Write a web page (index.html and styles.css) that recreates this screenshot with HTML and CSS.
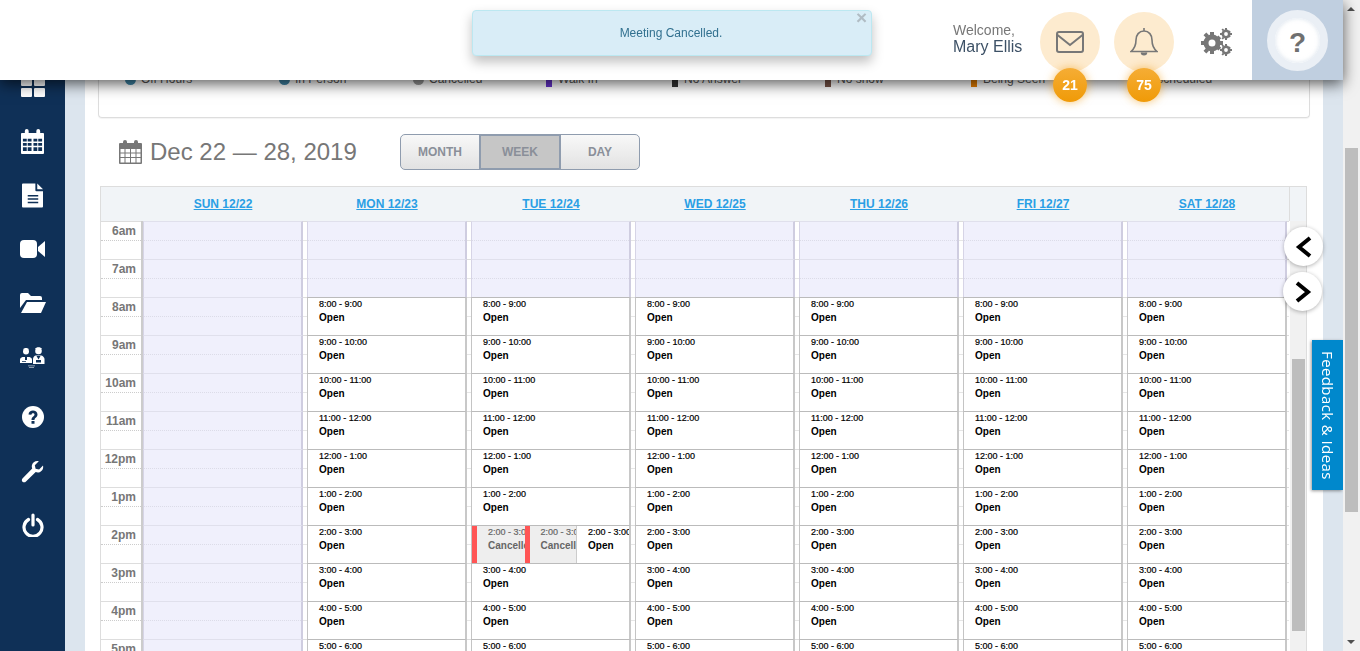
FILE: index.html
```html
<!DOCTYPE html>
<html lang="en">

<head>
    <meta charset="UTF-8">
    <title>Calendar</title>

    <link rel="stylesheet" href="styles.css">

</head>

<body>
    <header class="topbar">
        <div class="toast">
            <span class="toast-close">&times;</span>
            Meeting Cancelled.
        </div>
        <div class="welcome">
            <span>Welcome,</span>
            <strong>Mary Ellis</strong>
        </div>
        <div class="round-btn">
            <svg width="30" height="24" viewBox="0 0 30 24" fill="none" stroke="#777" stroke-width="2">
                <rect x="2" y="2" width="26" height="20" rx="2"/>
                <path d="M2.500 5L15 15 27.500 5"/>
            </svg>
            <span class="badge">21</span>
        </div>
        <div class="round-btn">
            <svg width="28" height="30" viewBox="0 0 28 30" fill="none" stroke="#777" stroke-width="1.600">
                <path d="M14 1v3M14 4c-5 0-8 4-8 9 0 6-2 9-5 11.500h26c-3-2.500-5-5.500-5-11.500 0-5-3-9-8-9z"/>
                <path d="M11.500 25.500c0 3 5 3 5 0" fill="#777"/>
            </svg>
            <span class="badge">75</span>
        </div>
        <div class="gears">
            <svg width="32" height="28" viewBox="0 0 32 28" fill="#777">
                <circle cx="11" cy="15" r="6" fill="none" stroke="#777" stroke-width="5"/>
                <path d="M9 4h4v4H9zM9 22h4v4H9zM0 13h4v4H0zM18 13h4v4h-4zM2.500 7.300l2.800-2.800 2.800 2.800-2.800 2.800zM14.600 19.700l2.800-2.800 2.800 2.800-2.800 2.800zM2.500 22.700l2.800 2.800 2.800-2.800-2.800-2.800zM14.600 10.300l2.800 2.800 2.800-2.800-2.800-2.800z"/>
                <circle cx="25" cy="6" r="3.200" fill="none" stroke="#777" stroke-width="2.600"/>
                <path d="M24 0h2v2h-2zM24 10h2v2h-2zM19 5h2v2h-2zM29 5h2v2h-2zM20.500 1.500l1.400-1 1.400 1.500-1.400 1.200zM27 8l1.400-1.200 1.400 1.500-1.400 1.200zM20.500 10.500l1.400 1 1.400-1.500-1.400-1.200zM27 4l1.400 1.200 1.400-1.500-1.400-1.200z"/>
                <circle cx="25" cy="22" r="3.200" fill="none" stroke="#777" stroke-width="2.600"/>
                <path d="M24 16h2v2h-2zM24 26h2v2h-2zM19 21h2v2h-2zM29 21h2v2h-2zM20.500 17.500l1.400-1 1.400 1.500-1.400 1.200zM27 24l1.400-1.200 1.400 1.500-1.400 1.200zM20.500 26.500l1.400 1 1.400-1.500-1.400-1.200zM27 20l1.400 1.200 1.400-1.500-1.400-1.200z"/>
            </svg>
        </div>
        <div class="help-block">
            <div class="help-ring"><span>?</span></div>
        </div>
    </header>

    <nav class="sidebar">
        <a class="nav-item">
            <svg width="24" height="20" viewBox="0 0 24 20" fill="#fff">
                <rect x="0" y="0" width="11" height="9" rx="1"/>
                <rect x="13" y="0" width="11" height="9" rx="1"/>
                <rect x="0" y="11" width="11" height="9" rx="1"/>
                <rect x="13" y="11" width="11" height="9" rx="1"/>
            </svg>
        </a>
        <a class="nav-item">
            <svg width="23" height="25" viewBox="0 0 24 26" fill="#fff">
                <path d="M1 4h3V2a2 2 0 0 1 4 0v2h8V2a2 2 0 0 1 4 0v2h3a1 1 0 0 1 1 1v20a1 1 0 0 1-1 1H1a1 1 0 0 1-1-1V5a1 1 0 0 1 1-1z"/>
                <path fill="#0f3057" d="M2 10h4v3H2zM7 10h4v3H7zM13 10h4v3h-4zM18 10h4v3h-4zM2 14.500h4v3H2zM7 14.500h4v3H7zM13 14.500h4v3h-4zM18 14.500h4v3h-4zM2 19h4v4H2zM7 19h4v4H7zM13 19h4v4h-4zM18 19h4v4h-4z"/>
            </svg>
        </a>
        <a class="nav-item">
            <svg width="21" height="25" viewBox="0 0 22 25" fill="#fff">
                <path d="M1 0h13v7a1 1 0 0 0 1 1h7v16a1 1 0 0 1-1 1H1a1 1 0 0 1-1-1V1a1 1 0 0 1 1-1z"/>
                <path d="M16 0l6 6h-6z"/>
                <path fill="#0f3057" d="M6 12h11v1.500H6zM6 15.500h11V17H6zM6 19h11v1.500H6z"/>
            </svg>
        </a>
        <a class="nav-item">
            <svg width="25" height="18" viewBox="0 0 25 18" fill="#fff">
                <rect x="0" y="0" width="17" height="18" rx="4"/>
                <path d="M18 7l7-6v16l-7-6z"/>
            </svg>
        </a>
        <a class="nav-item">
            <svg width="26" height="20" viewBox="0 0 26 20" fill="#fff">
                <path d="M0 2a2 2 0 0 1 2-2h6l3 3h9a2 2 0 0 1 2 2v2H6L0 15z"/>
                <path d="M7 9h19l-5 11H1z"/>
            </svg>
        </a>
        <a class="nav-item">
            <svg width="25" height="21" viewBox="0 0 25 21" fill="#fff">
                <circle cx="6" cy="4.500" r="3"/>
                <path d="M3 2.500c1-2 5-2 6 0z"/>
                <path d="M0 16v-3.500c0-1 1-2 2.500-2.500h7c1.500.5 2.500 1.500 2.500 2.500V16z"/>
                <path fill="#0f3057" d="M5 10h2v3H5zM2 14h4v.8H2z"/>
                <circle cx="18.500" cy="4" r="3.300"/>
                <path d="M15 2c1-2.500 6-2.500 7 0z"/>
                <path d="M13 17v-5c0-1.500 1-3 2.500-3.500h6c1.500.5 3 2 3 3.500v5z"/>
                <path fill="#0f3057" d="M16.500 9h4l-2 3.500zM16 13h5v2.500h-5z"/>
                <path d="M8 18.500h7v.8H8zM9 20h5v.8H9z" opacity=".7"/>
            </svg>
        </a>
        <a class="nav-item nav-help">
            <svg width="22" height="22" viewBox="0 0 22 22">
                <circle cx="11" cy="11" r="11" fill="#fff"/>
                <path d="M6.500 8.500C6.500 5.800 8.800 4.500 11 4.500s4.500 1.300 4.500 4c0 3.200-3 3-3 5.500h-3c0-3.500 3-3.500 3-5.500 0-.8-.7-1.200-1.500-1.200-1 0-1.500.6-1.600 1.500zM9.500 15h3v2.800h-3z" fill="#0f3057"/>
            </svg>
        </a>
        <a class="nav-item">
            <svg width="23" height="23" viewBox="0 0 23 23" fill="#fff">
                <path d="M22 5.500c.8 3-1 6.500-4.500 7-1 .1-2 0-2.800-.4L5 21.500c-1 1-2.500 1.200-3.500.2s-.8-2.500.2-3.500l9.500-9.700c-.4-.9-.5-1.800-.4-2.700.5-3.500 4-5.300 7-4.500l-4 4 .8 3.500 3.500.8z"/>
            </svg>
        </a>
        <a class="nav-item">
            <svg width="22" height="24" viewBox="0 0 22 24" fill="none" stroke="#fff" stroke-width="3.200" stroke-linecap="round">
                <path d="M6.500 6.500a9 9 0 1 0 9 0"/>
                <path d="M11 2v10"/>
            </svg>
        </a>
    </nav>

    <main class="content">
        <section class="legend">
            <span class="key key-off"><i class="dot dot-blue"></i>Off Hours</span>
            <span class="key key-person"><i class="dot dot-blue"></i>In Person</span>
            <span class="key key-cancelled"><i class="dot dot-grey"></i>Cancelled</span>
            <span class="key key-walk"><i class="bar bar-purple"></i>Walk In</span>
            <span class="key key-answer"><i class="bar bar-black"></i>No Answer</span>
            <span class="key key-show"><i class="bar bar-brown"></i>No show</span>
            <span class="key key-seen"><i class="bar bar-orange"></i>Being Seen</span>
            <span class="key"><i class="bar bar-none"></i>Rescheduled</span>
        </section>

        <div class="toolbar">
            <h1 class="range">
                <svg width="23" height="24" viewBox="0 0 23 24" fill="#777">
                    <path d="M1 3h3V2a2 2 0 0 1 4 0v1h7V2a2 2 0 0 1 4 0v1h3a1 1 0 0 1 1 1v19a1 1 0 0 1-1 1H1a1 1 0 0 1-1-1V4a1 1 0 0 1 1-1z"/>
                    <path fill="#fff" d="M1.500 9h4v3.500h-4zM6.500 9h4.500v3.500H6.500zM12 9h4.500v3.500H12zM17.500 9h4v3.500h-4zM1.500 13.500h4V17h-4zM6.500 13.500h4.500V17H6.500zM12 13.500h4.500V17H12zM17.500 13.500h4V17h-4zM1.500 18h4v4.500h-4zM6.500 18h4.500v4.500H6.500zM12 18h4.500v4.500H12zM17.500 18h4v4.500h-4z"/>
                </svg>
                Dec 22 — 28, 2019
            </h1>
            <div class="views">
                <button>MONTH</button>
                <button class="active">WEEK</button>
                <button>DAY</button>
            </div>
        </div>

        <section class="calendar">
            <div class="cal-head"></div>
            <div class="cal-body"></div>
        </section>
    </main>

    <div class="cal-arrow arrow-prev">
        <svg width="18" height="22" viewBox="0 0 18 22" fill="none" stroke="#000" stroke-width="4"><path d="M15 2L4 11l11 9"/></svg>
    </div>
    <div class="cal-arrow arrow-next">
        <svg width="18" height="22" viewBox="0 0 18 22" fill="none" stroke="#000" stroke-width="4"><path d="M3 2l11 9-11 9"/></svg>
    </div>
    <a class="feedback">Feedback &amp; Ideas</a>

    <div class="page-scroll"><b class="up"></b><i></i><b class="down"></b></div>

    <script>
        const dage = ["SUN 12/22", "MON 12/23", "TUE 12/24", "WED 12/25", "THU 12/26", "FRI 12/27", "SAT 12/28"];
        const timer = ["6am", "7am", "8am", "9am", "10am", "11am", "12pm", "1pm", "2pm", "3pm", "4pm", "5pm"];
        const tider = ["8:00 - 9:00", "9:00 - 10:00", "10:00 - 11:00", "11:00 - 12:00", "12:00 - 1:00", "1:00 - 2:00", "2:00 - 3:00", "3:00 - 4:00", "4:00 - 5:00", "5:00 - 6:00"];

        const head = document.querySelector(".cal-head");
        const body = document.querySelector(".cal-body");

        head.innerHTML = '<div class="head-gutter"></div>' + dage.map(d => `<div class="head-day"><a>${d}</a></div>`).join("") + '<div class="head-end"></div>';

        let html = '<div class="times">' + timer.map(t => `<div class="time"><span>${t}</span></div>`).join("") + '</div>';

        dage.forEach((dag, i) => {
            html += '<div class="day">';
            if (i == 0) {
                timer.forEach(() => html += '<div class="hour"></div>');
            } else {
                html += '<div class="hour"></div><div class="hour"></div>';
                tider.forEach((tid, j) => {
                    if (i == 2 && j == 6) {
                        html += `<div class="slot split">
                            <div class="mini cancelled"><p>${tid}</p><p class="status">Cancelled</p></div>
                            <div class="mini cancelled"><p>${tid}</p><p class="status">Cancelled</p></div>
                            <div class="mini"><p>${tid}</p><p class="status">Open</p></div>
                        </div>`;
                    } else {
                        html += `<div class="slot"><p>${tid}</p><p class="status">Open</p></div>`;
                    }
                });
            }
            html += '</div>';
        });

        html += '<div class="inner-scroll"><i></i></div>';
        body.innerHTML = html;
    </script>

</body></html>
```

FILE: styles.css
```css
* {
    box-sizing: border-box;
}

html,
body {
    margin: 0;
    height: 651px;
    overflow: hidden;
}

body {
    font-family: "Liberation Sans", Arial, sans-serif;
    background-color: #dce5ee;
    display: flex;
}

p {
    margin: 0;
}

/* top bar */
.topbar {
    position: fixed;
    top: 0;
    left: 0;
    width: 1343px;
    height: 80px;
    background-color: #fff;
    box-shadow: 0 4px 14px rgba(0, 0, 0, 0.65);
    display: flex;
    align-items: flex-start;
    justify-content: flex-end;
    z-index: 10;
}

.toast {
    position: absolute;
    left: 472px;
    top: 10px;
    width: 400px;
    height: 46px;
    padding-right: 2px;
    line-height: 44px;
    text-align: center;
    font-size: 12px;
    color: #31708f;
    background-color: #d9edf7;
    border: 1px solid #bce8f1;
    border-radius: 4px;
    box-shadow: 0 6px 12px rgba(0, 0, 0, 0.25);
}

.toast-close {
    position: absolute;
    right: 4px;
    top: -1px;
    line-height: 16px;
    font-size: 19px;
    font-weight: bold;
    color: #b0bcc4;
}

.welcome {
    width: 80px;
    margin-top: 22px;
    display: flex;
    flex-direction: column;
    font-size: 14px;
    color: #777;
}

.welcome strong {
    font-weight: normal;
    font-size: 16px;
    color: #3d5166;
    line-height: 17px;
}

.round-btn {
    position: relative;
    width: 60px;
    height: 60px;
    margin: 12px 7px 0 7px;
    border-radius: 50%;
    background-color: #fdebcf;
    display: flex;
    align-items: center;
    justify-content: center;
}

.badge {
    position: absolute;
    left: 13px;
    top: 56px;
    width: 34px;
    height: 34px;
    line-height: 34px;
    text-align: center;
    border-radius: 50%;
    font-size: 14px;
    font-weight: bold;
    color: #fff;
    background: linear-gradient(#f5ad35, #f09a07);
    box-shadow: 0 0 10px rgba(243, 156, 18, 0.6);
}

.gears {
    width: 71px;
    height: 80px;
    padding-top: 28px;
    text-align: center;
}

.help-block {
    width: 91px;
    height: 80px;
    background-color: #c0cfe0;
    display: flex;
    align-items: center;
    justify-content: center;
}

.help-ring {
    width: 61px;
    height: 61px;
    border-radius: 50%;
    background-color: #fff;
    border: 8px solid #eaeff5;
    box-shadow: inset 0 0 4px rgba(192, 207, 224, 0.6);
    text-align: center;
    line-height: 50px;
    font-size: 28px;
    font-weight: bold;
    color: #707070;
}

/* side menu */
.sidebar {
    flex: none;
    width: 65px;
    height: 651px;
    background-color: #0f3057;
    padding-top: 60px;
    display: flex;
    flex-direction: column;
}

.nav-item {
    flex: none;
    height: 54px;
    display: flex;
    align-items: center;
    justify-content: center;
}

.nav-help {
    margin-top: 6px;
}

/* content */
.content {
    flex: none;
    width: 1238px;
    margin-left: 20px;
    height: 651px;
    background-color: #fff;
    overflow: hidden;
    padding: 0 13px;
}

.legend {
    height: 60px;
    margin-top: 58px;
    width: 1212px;
    border: 1px solid #ddd;
    border-top: none;
    border-radius: 0 0 4px 4px;
    box-shadow: 0 1px 1px rgba(0, 0, 0, 0.05);
    padding: 13px 0 0 26px;
    display: flex;
    font-size: 12px;
    color: #555;
}

.key {
    display: flex;
    align-items: center;
    height: 16px;
}

.key-off {
    width: 154px;
}

.key-person {
    width: 134px;
}

.key-cancelled {
    width: 133px;
}

.key-walk {
    width: 126px;
}

.key-answer {
    width: 153px;
}

.key-show {
    width: 146px;
}

.key-seen {
    width: 140px;
}

.dot {
    width: 11px;
    height: 11px;
    border-radius: 50%;
    margin-right: 5px;
}

.dot-blue {
    background-color: #3f87a8;
}

.dot-grey {
    background-color: #999;
}

.bar {
    width: 6px;
    height: 16px;
    margin-right: 6px;
}

.bar-purple {
    background-color: #6633cc;
}

.bar-black {
    background-color: #333;
}

.bar-brown {
    background-color: #795548;
}

.bar-orange {
    background-color: #e67e00;
}

.bar-none {
    width: 25px;
}

.toolbar {
    display: flex;
    align-items: center;
    height: 36px;
    margin-top: 16px;
    padding-left: 21px;
}

.range {
    margin: 0;
    width: 281px;
    display: flex;
    align-items: center;
    gap: 8px;
    font-size: 24px;
    font-weight: normal;
    color: #777;
}

.views {
    display: flex;
    width: 240px;
}

.views button {
    flex: 1;
    height: 36px;
    padding: 0;
    font-family: inherit;
    font-size: 12px;
    font-weight: bold;
    color: #8a8f99;
    background: linear-gradient(#f8f8f8, #e2e2e2);
    border: 1px solid #8f9cae;
    margin-left: -1px;
}

.views button:first-child {
    border-radius: 5px 0 0 5px;
    margin-left: 0;
}

.views button:last-child {
    border-radius: 0 5px 5px 0;
}

.views .active {
    background: #c6c6c6;
    border-width: 2px;
}

/* calendar */
.calendar {
    width: 1207px;
    margin-top: 16px;
    margin-left: 2px;
}

.cal-head {
    height: 35px;
    display: flex;
    background-color: #f1f4f7;
    border: 1px solid #ddd;
    border-bottom: none;
}

.head-gutter {
    width: 40px;
}

.head-day {
    width: 164px;
    text-align: center;
    line-height: 34px;
    font-size: 12px;
    font-weight: bold;
}

.head-day a {
    color: #2a9fe5;
    text-decoration: underline;
}

.head-end {
    flex: 1;
    border-left: 1px solid #ddd;
}

.cal-body {
    display: flex;
    border-left: 1px solid #ddd;
}

.times {
    flex: none;
    width: 40px;
}

.time {
    height: 38px;
    border-top: 1px solid #ddd;
    position: relative;
    font-size: 12px;
    font-weight: bold;
    color: #777;
    text-align: right;
    padding: 1px 5px 0 0;
    line-height: 16px;
}

.time::after {
    content: "";
    position: absolute;
    left: 0;
    right: 0;
    top: 18px;
    border-top: 1px dotted #ccc;
}

.day {
    flex: none;
    width: 164px;
    height: 456px;
    padding: 0 2px;
    background-image: repeating-linear-gradient(#ddd 0, #ddd 1px, transparent 1px, transparent 19px, #e6e6e6 19px, #e6e6e6 20px, transparent 20px, transparent 38px);
}

.times + .day {
    padding-left: 0;
    border-left: 2px solid #ccc;
}

.hour {
    height: 38px;
    position: relative;
    background-color: #f0f0fc;
    border-top: 1px solid #e0e0ec;
    border-left: 1px solid #d6d4e6;
    border-right: 2px solid #cfcde0;
}

.hour::after {
    content: "";
    position: absolute;
    left: 0;
    right: 0;
    top: 18px;
    border-top: 1px dotted #dcdce8;
}

.slot {
    height: 38px;
    padding: 0 0 0 11px;
    background-color: #fff;
    border-left: 1px solid #c4c4c4;
    border-right: 2px solid #c8c8c8;
    border-top: 1px solid #bbb;
    color: #000;
    font-size: 9px;
    white-space: nowrap;
}

.slot p {
    height: 13px;
    line-height: 13px;
    -webkit-text-stroke: 0.2px;
}

.slot .status {
    line-height: 13px;
    font-size: 10px;
    font-weight: bold;
    -webkit-text-stroke: 0;
}

.split {
    display: flex;
    padding: 0;
}

.mini {
    width: 53px;
    padding-left: 11px;
    overflow: hidden;
}

.mini:last-child {
    flex: 1;
}

.cancelled {
    width: 52.500px;
    background-color: #eee;
    border-left: 5px solid #f55;
    color: #666;
}

.cancelled + .cancelled {
    border-right: 1px solid #ccc;
}

.inner-scroll {
    flex: none;
    width: 18px;
    background-color: #f1f1f1;
    border-left: 1px solid #fff;
    border-right: 1px solid #ddd;
    padding: 138px 1px 0 2px;
}

.inner-scroll i {
    display: block;
    height: 272px;
    background-color: #bdbdbd;
}

/* things on top */
.cal-arrow {
    position: fixed;
    width: 39px;
    height: 39px;
    border-radius: 50%;
    background-color: #fff;
    box-shadow: 0 1px 4px rgba(0, 0, 0, 0.3);
    display: flex;
    align-items: center;
    justify-content: center;
}

.arrow-prev {
    left: 1284px;
    top: 227px;
}

.arrow-next {
    left: 1283px;
    top: 272px;
}

.feedback {
    position: fixed;
    left: 1312px;
    top: 340px;
    width: 31px;
    height: 150px;
    background-color: #0088cc;
    color: #fff;
    font-family: "Open Sans", sans-serif;
    font-size: 15px;
    letter-spacing: 0.4px;
    writing-mode: vertical-rl;
    text-align: center;
    line-height: 30px;
    box-shadow: -1px 1px 3px rgba(0, 0, 0, 0.4);
}

.page-scroll {
    position: fixed;
    left: 1343px;
    top: 0;
    width: 17px;
    height: 651px;
    background-color: #f1f1f1;
}

.page-scroll i {
    position: absolute;
    left: 2px;
    top: 148px;
    width: 13px;
    height: 364px;
    background-color: #bdbdbd;
}

.page-scroll b {
    position: absolute;
    left: 4px;
    width: 0;
    height: 0;
    border-left: 4px solid transparent;
    border-right: 4px solid transparent;
}

.page-scroll .up {
    top: 7px;
    border-bottom: 4px solid #505050;
}

.page-scroll .down {
    bottom: 7px;
    border-top: 4px solid #505050;
}
```
